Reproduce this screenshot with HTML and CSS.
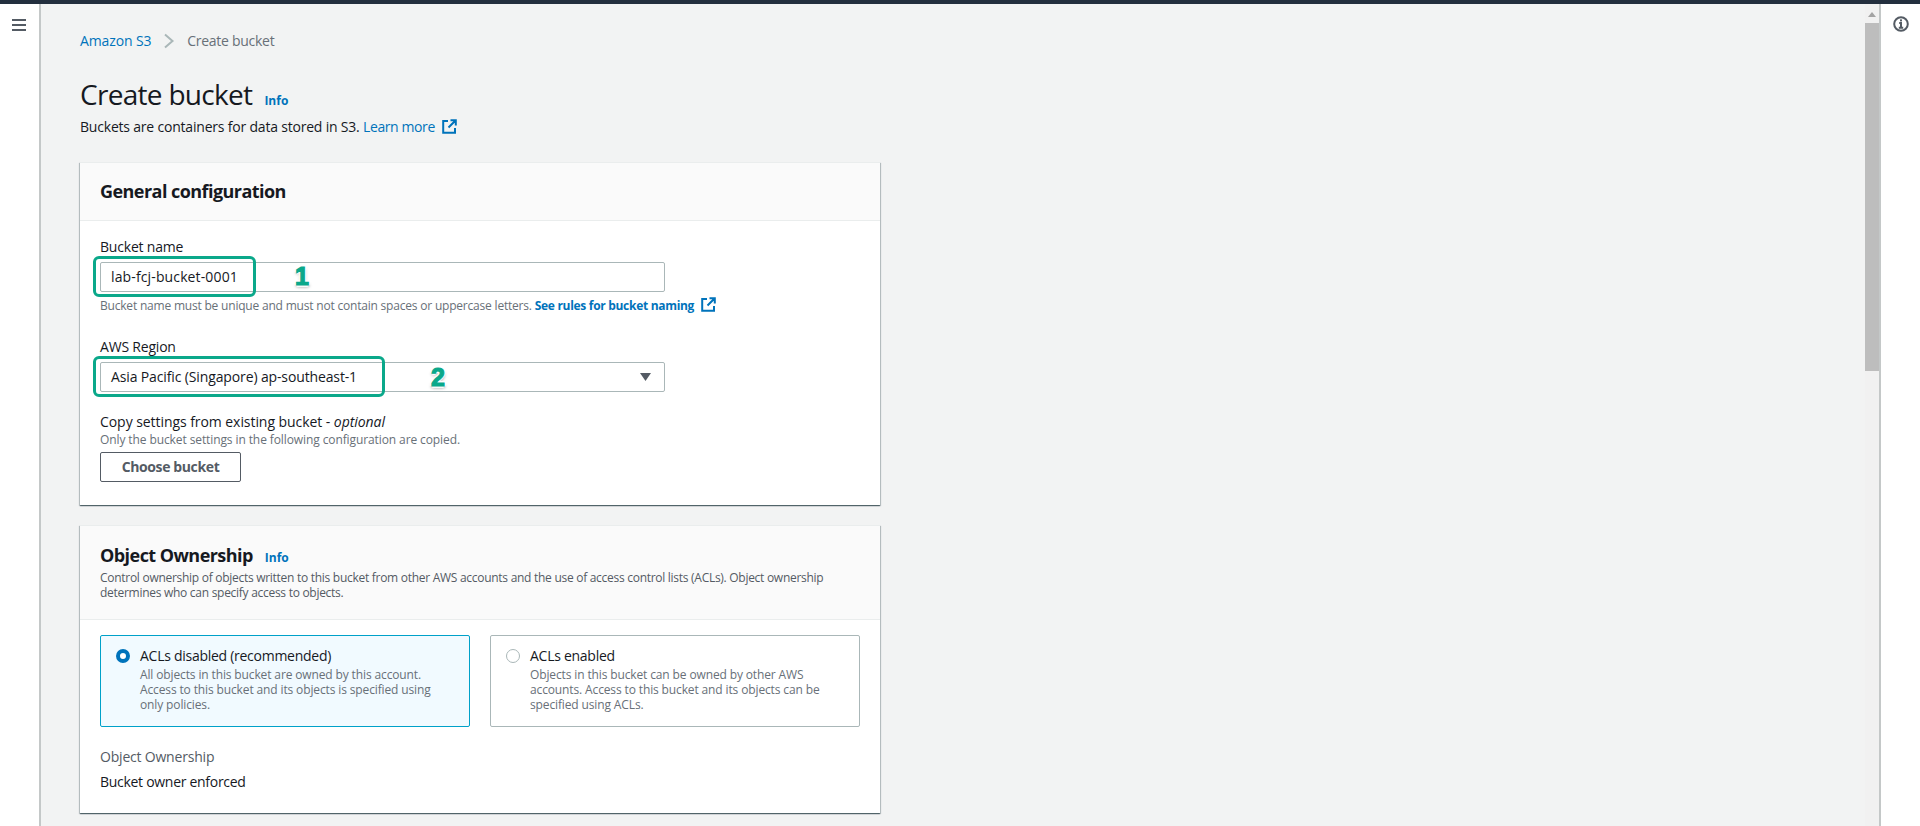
FILE: index.html
```html
<!DOCTYPE html>
<html lang="en">
<head>
<meta charset="utf-8">
<title>Create bucket</title>
<link rel="stylesheet" href="styles.css">
</head>
<body>
<div class="topbar"></div>
<div class="shell">
  <nav class="nav-rail">
    <svg class="menu-icon" width="16" height="14" viewBox="0 0 16 14"><path d="M1 2h14M1 7h14M1 12h14" stroke="#545b64" stroke-width="2" fill="none"/></svg>
  </nav>
  <main class="content">
    <div class="breadcrumbs">
      <a class="link crumb-link">Amazon S3</a>
      <svg class="crumb-sep" width="12" height="16" viewBox="0 0 12 16"><path d="M2 1.5l7.5 6.5L2 14.5" stroke="#aab7b8" stroke-width="2" fill="none"/></svg>
      <span class="crumb-current">Create bucket</span>
    </div>
    <div class="page-head">
      <h1 class="page-title">Create bucket</h1>
      <a class="info">Info</a>
    </div>
    <p class="page-desc">Buckets are containers for data stored in S3. <a class="link learn-more">Learn more</a>
      <svg class="ext-icon" width="15" height="15" viewBox="0 0 15 15"><path d="M6 2H1.2v11.8H13V9M8.5 1.2h5.3v5.3M13.5 1.5L6.5 8.5" stroke="#0073bb" stroke-width="2" fill="none"/></svg>
    </p>

    <section class="card card-general">
      <header class="card-head card-head-plain">
        <h2 class="card-title">General configuration</h2>
      </header>
      <div class="card-body card-body-general">
        <div class="field">
          <label class="field-label">Bucket name</label>
          <div class="control">
            <div class="input input-name">lab-fcj-bucket-0001</div>
            <span class="mark mark-name"></span>
            <span class="step step-one">1</span>
          </div>
          <p class="hint">Bucket name must be unique and must not contain spaces or uppercase letters. <a class="hint-link">See rules for bucket naming</a>
            <svg class="ext-icon" width="15" height="15" viewBox="0 0 15 15"><path d="M6 2H1.2v11.8H13V9M8.5 1.2h5.3v5.3M13.5 1.5L6.5 8.5" stroke="#0073bb" stroke-width="2" fill="none"/></svg>
          </p>
        </div>
        <div class="field field-region">
          <label class="field-label">AWS Region</label>
          <div class="control">
            <div class="input input-select">Asia Pacific (Singapore) ap-southeast-1
              <svg class="caret" width="11" height="8" viewBox="0 0 11 8"><path d="M0 0h11L5.5 8z" fill="#545b64"/></svg>
            </div>
            <span class="mark mark-region"></span>
            <span class="step step-two">2</span>
          </div>
        </div>
        <div class="field field-copy">
          <label class="field-label field-label-copy">Copy settings from existing bucket - <em>optional</em></label>
          <p class="copy-desc">Only the bucket settings in the following configuration are copied.</p>
          <button class="button" type="button">Choose bucket</button>
        </div>
      </div>
    </section>

    <section class="card card-ownership">
      <header class="card-head card-head-desc">
        <div class="title-row">
          <h2 class="card-title">Object Ownership</h2>
          <a class="info">Info</a>
        </div>
        <p class="card-desc">Control ownership of objects written to this bucket from other AWS accounts and the use of access control lists (ACLs). Object ownership determines who can specify access to objects.</p>
      </header>
      <div class="card-body card-body-owner">
        <div class="tiles">
          <div class="tile tile-selected">
            <span class="radio radio-on"></span>
            <div>
              <div class="tile-title">ACLs disabled (recommended)</div>
              <p class="tile-desc">All objects in this bucket are owned by this account. Access to this bucket and its objects is specified using only policies.</p>
            </div>
          </div>
          <div class="tile">
            <span class="radio"></span>
            <div>
              <div class="tile-title">ACLs enabled</div>
              <p class="tile-desc">Objects in this bucket can be owned by other AWS accounts. Access to this bucket and its objects can be specified using ACLs.</p>
            </div>
          </div>
        </div>
        <div class="kv-key">Object Ownership</div>
        <div class="kv-value">Bucket owner enforced</div>
      </div>
    </section>
  </main>
  <div class="scrollbar">
    <div class="scroll-arrow"></div>
    <div class="scroll-thumb"></div>
  </div>
  <aside class="tools-rail">
    <svg width="16" height="16" viewBox="0 0 16 16"><circle cx="8" cy="8" r="6.8" stroke="#545b64" stroke-width="2" fill="none"/><path d="M8 7v4.6M5.8 11.8h4.4M6.2 7H9" stroke="#545b64" stroke-width="2" fill="none"/><rect x="7" y="3.4" width="2" height="2" fill="#545b64"/></svg>
  </aside>
</div>
</body>
</html>
```
FILE: styles.css
```css
* { box-sizing: border-box; }
html, body { margin: 0; height: 100%; overflow: hidden; }
body {
  font-family: "Open Sans", "Noto Sans", sans-serif;
  font-size: 14px;
  line-height: 20px;
  letter-spacing: -0.2px;
  color: #16191f;
  background: #fff;
  display: flex;
  flex-direction: column;
}
p, h1, h2 { margin: 0; }
.topbar { height: 4px; background: #232f3e; flex: none; }
.shell { flex: 1; display: flex; min-height: 0; }
.nav-rail {
  width: 41px;
  flex: none;
  background: #fff;
  border-right: 2px solid #c4c8c8;
  display: flex;
  justify-content: center;
  padding: 14px 2px 0 0;
}
.menu-icon { display: block; }
.content {
  flex: 1;
  min-width: 0;
  background: #f2f3f3;
  padding: 27px 0 0 39px;
  overflow: hidden;
}
.breadcrumbs { display: flex; align-items: center; height: 20px; color: #687078; }
.breadcrumbs .crumb-sep { margin: 0 12px 0 12px; }
.crumb-link { letter-spacing: -0.13px; }
.crumb-current { letter-spacing: -0.28px; }
.link { color: #0073bb; }
.learn-more { letter-spacing: -0.4px; }
.page-head { display: flex; align-items: baseline; margin-top: 25px; }
.page-title { font-size: 28px; line-height: 36px; font-weight: 400; letter-spacing: -0.7px; }
.info { color: #0073bb; font-size: 12px; font-weight: 700; margin-left: 12px; letter-spacing: 0; }
.page-desc { margin-top: 5px; height: 20px; }
.ext-icon { vertical-align: -2px; margin-left: 4px; }
.card {
  width: 800px;
  background: #fff;
  box-shadow: 0 1px 1px 0 rgba(0,28,36,.5), 1px 1px 1px 0 rgba(0,28,36,.18), -1px 1px 1px 0 rgba(0,28,36,.18);
  border-top: 1px solid #eaeded;
}
.card-general { margin-top: 25px; }
.card-ownership { margin-top: 20px; }
.card-head { background: #fafafa; border-bottom: 1px solid #eaeded; padding: 0 20px; }
.card-head-plain { height: 58px; display: flex; align-items: center; padding-bottom: 2px; }
.card-head-desc { height: 94px; padding-top: 18px; }
.card-title { font-size: 18px; line-height: 22px; font-weight: 700; letter-spacing: -0.55px; }
.title-row { display: flex; align-items: baseline; }
.card-desc { font-size: 12px; line-height: 15px; color: #545b64; margin-top: 2px; letter-spacing: -0.28px; }
.card-body { padding: 0 20px; }
.card-body-general { padding-top: 16px; height: 284px; }
.field-label { display: block; height: 20px; }
.field-label-copy { letter-spacing: -0.06px; }
.field-region { margin-top: 24px; }
.field-copy { margin-top: 20px; }
.control { position: relative; margin-top: 5px; width: 565px; }
.input {
  height: 30px;
  border: 1px solid #aab7b8;
  border-radius: 2px;
  padding: 4px 10px;
  background: #fff;
}
.input-name { letter-spacing: 0.13px; }
.input-select { display: flex; align-items: center; justify-content: space-between; padding-right: 13px; letter-spacing: -0.13px; }
.hint { font-size: 12px; line-height: 15px; color: #687078; margin-top: 5px; white-space: nowrap; }
.hint-link { color: #0073bb; font-weight: 700; letter-spacing: -0.3px; }
.mark { position: absolute; border: 3px solid #0aa88a; border-radius: 6px; pointer-events: none; }
.mark-name { left: -7px; top: -6px; width: 163px; height: 41px; }
.mark-region { left: -7px; top: -6px; width: 292px; height: 41px; }
.step {
  position: absolute;
  font-family: "Liberation Sans", sans-serif;
  font-size: 25px;
  line-height: 30px;
  font-weight: 700;
  letter-spacing: 0;
  color: #0aa88a;
  -webkit-text-stroke: 1.2px #0aa88a;
  text-shadow: 2px 0 1px #fff, -2px 0 1px #fff, 0 2px 1px #fff, 0 -2px 1px #fff, 1px 2px 3px #aaa, -1px 2px 3px #ccc;
}
.step-one { left: 195px; top: -1px; }
.step-two { left: 331px; top: 0; }
.copy-desc { font-size: 12px; line-height: 15px; color: #687078; letter-spacing: -0.1px; }
.button {
  display: block;
  margin-top: 5px;
  width: 141px;
  height: 30px;
  background: #fff;
  border: 1px solid #545b64;
  border-radius: 2px;
  font: 700 14px/20px "Open Sans", "Noto Sans", sans-serif;
  letter-spacing: -0.38px;
  color: #545b64;
  padding: 0;
}
.card-body-owner { padding-top: 15px; height: 193px; }
.tiles { display: grid; grid-template-columns: 370px 370px; column-gap: 20px; }
.tile {
  height: 92px;
  border: 1px solid #aab7b8;
  border-radius: 2px;
  padding: 10px 24px 10px 15px;
  display: flex;
  gap: 10px;
  background: #fff;
}
.tile-selected { background: #f1faff; border-color: #00a1c9; }
.radio {
  flex: none;
  width: 14px;
  height: 14px;
  margin-top: 3px;
  border-radius: 50%;
  border: 1px solid #aab7b8;
  background: #fff;
}
.radio-on { border: 4px solid #0073bb; }
.tile-title { line-height: 20px; letter-spacing: -0.27px; }
.tile-desc { font-size: 12px; line-height: 15px; color: #687078; margin-top: 1px; letter-spacing: -0.13px; }
.kv-key { margin-top: 20px; color: #545b64; }
.kv-value { margin-top: 5px; letter-spacing: -0.29px; }
.scrollbar {
  width: 14px;
  flex: none;
  background: #f1f1f1;
}
.scroll-arrow { height: 19px; position: relative; }
.scroll-arrow::after {
  content: "";
  position: absolute;
  left: 3px;
  top: 8px;
  border: 4px solid transparent;
  border-top: 0;
  border-bottom: 5px solid #a3a3a3;
}
.scroll-thumb { height: 348px; background: #bdbdbd; }
.tools-rail {
  width: 41px;
  flex: none;
  background: #fff;
  border-left: 2px solid #c4c8c8;
  display: flex;
  justify-content: center;
  align-items: flex-start;
  padding-top: 12px;
}
```
